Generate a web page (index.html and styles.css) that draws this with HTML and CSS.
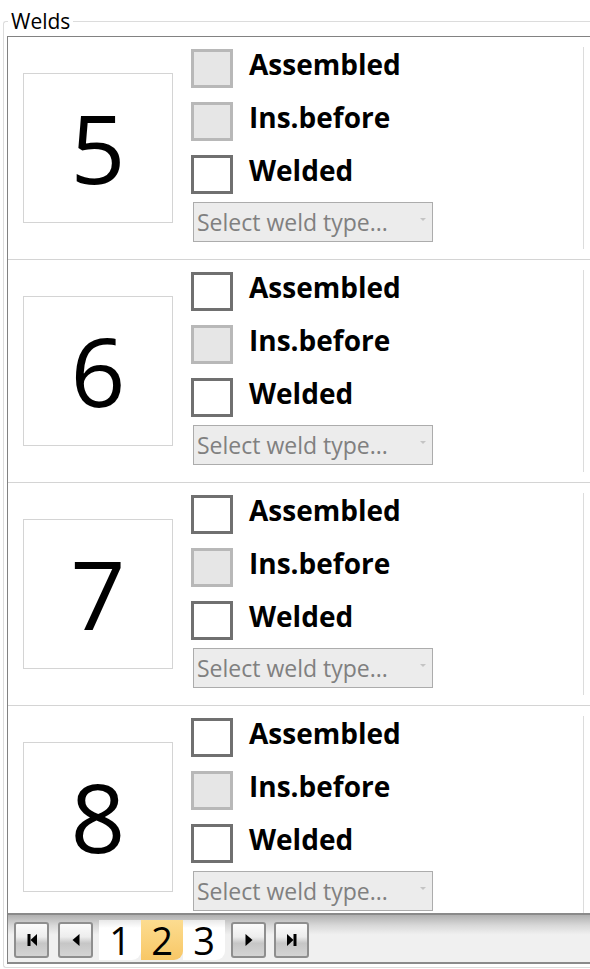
FILE: index.html
```html
<!DOCTYPE html>
<html>
<head>
<meta charset="utf-8">
<link rel="stylesheet" href="styles.css">
</head>
<body>
<div class="group">
  <div class="legend">Welds</div>
  <div class="frame">
    <div class="list">
      <div class="row">
        <div class="cell">
          <div class="numbox">5</div>
          <div class="controls">
            <div class="check"><span class="box disabled"></span><span class="label">Assembled</span></div>
            <div class="check"><span class="box disabled"></span><span class="label">Ins.before</span></div>
            <div class="check"><span class="box"></span><span class="label">Welded</span></div>
            <div class="combo"><span class="combo-text">Select weld type...</span><span class="arrow"></span></div>
          </div>
        </div>
      </div>
      <div class="row">
        <div class="cell">
          <div class="numbox">6</div>
          <div class="controls">
            <div class="check"><span class="box"></span><span class="label">Assembled</span></div>
            <div class="check"><span class="box disabled"></span><span class="label">Ins.before</span></div>
            <div class="check"><span class="box"></span><span class="label">Welded</span></div>
            <div class="combo"><span class="combo-text">Select weld type...</span><span class="arrow"></span></div>
          </div>
        </div>
      </div>
      <div class="row">
        <div class="cell">
          <div class="numbox">7</div>
          <div class="controls">
            <div class="check"><span class="box"></span><span class="label">Assembled</span></div>
            <div class="check"><span class="box disabled"></span><span class="label">Ins.before</span></div>
            <div class="check"><span class="box"></span><span class="label">Welded</span></div>
            <div class="combo"><span class="combo-text">Select weld type...</span><span class="arrow"></span></div>
          </div>
        </div>
      </div>
      <div class="row">
        <div class="cell">
          <div class="numbox">8</div>
          <div class="controls">
            <div class="check"><span class="box"></span><span class="label">Assembled</span></div>
            <div class="check"><span class="box disabled"></span><span class="label">Ins.before</span></div>
            <div class="check"><span class="box"></span><span class="label">Welded</span></div>
            <div class="combo"><span class="combo-text">Select weld type...</span><span class="arrow"></span></div>
          </div>
        </div>
      </div>
    </div>
    <div class="pager">
      <div class="btn first">
        <svg width="14" height="14" viewBox="0 0 14 14"><rect x="2.5" y="1" width="3" height="12" fill="#000"/><polygon points="12,1 12,13 5.5,7" fill="#000"/></svg>
      </div>
      <div class="btn prev">
        <svg width="14" height="14" viewBox="0 0 14 14"><polygon points="10.5,1 10.5,13 3.5,7" fill="#000"/></svg>
      </div>
      <div class="tabs">
        <div class="tab">1</div>
        <div class="tab current">2</div>
        <div class="tab">3</div>
      </div>
      <div class="btn next">
        <svg width="14" height="14" viewBox="0 0 14 14"><polygon points="3.5,1 3.5,13 10.5,7" fill="#000"/></svg>
      </div>
      <div class="btn last">
        <svg width="14" height="14" viewBox="0 0 14 14"><polygon points="2,1 2,13 8.5,7" fill="#000"/><rect x="8.5" y="1" width="3" height="12" fill="#000"/></svg>
      </div>
    </div>
  </div>
</div>
</body>
</html>
```

FILE: styles.css
```css
html, body {
  margin: 0;
  padding: 0;
  background: #ffffff;
  width: 590px;
  height: 969px;
  overflow: hidden;
  font-family: "Open Sans", "Noto Sans", sans-serif;
}

.group {
  position: relative;
  margin: 21px 0 0 3px;
  height: 947px;
  border: 1px solid #dcdcdc;
  border-right: none;
  border-radius: 3px 0 0 3px;
  padding: 14px 0 3px 3px;
  box-sizing: border-box;
}

.legend {
  position: absolute;
  left: 4px;
  top: -13px;
  padding: 0 3px;
  background: #ffffff;
  font-size: 21px;
  line-height: 24px;
  color: #000;
}

.frame {
  border-top: 1px solid #828282;
  border-left: 1px solid #828282;
  display: flex;
  flex-direction: column;
  height: 100%;
  box-sizing: border-box;
}

.list {
  height: 876px;
  flex: none;
  overflow: hidden;
}

.row {
  height: 223px;
  border-bottom: 1px solid #d4d4d4;
  padding: 10px 0 0 0;
  box-sizing: border-box;
}

.cell {
  width: 576px;
  height: 202px;
  border-right: 1px solid #dcdcdc;
  box-sizing: border-box;
  display: flex;
  align-items: center;
}

.numbox {
  width: 150px;
  height: 150px;
  margin-left: 15px;
  border: 1px solid #d4d4d4;
  box-sizing: border-box;
  display: flex;
  align-items: center;
  justify-content: center;
  font-size: 96px;
  line-height: 1;
  color: #000;
  padding-bottom: 2px;
}

.controls {
  align-self: flex-start;
  margin-left: 18px;
  padding-top: 2px;
  display: flex;
  flex-direction: column;
  gap: 14px;
}

.check {
  display: flex;
  align-items: center;
  height: 39px;
}

.box {
  width: 42px;
  height: 39px;
  border: 3px solid #707070;
  background: #ffffff;
  box-sizing: border-box;
}
.box.disabled {
  border-color: #b8b8b8;
  background: #e6e6e6;
}

.label {
  margin-left: 16px;
  font-weight: 700;
  font-size: 28px;
  line-height: 39px;
  color: #000;
  position: relative;
  top: -4px;
}

.combo {
  margin-left: 2px;
  margin-top: -6px;
  width: 240px;
  height: 40px;
  border: 1px solid #acacac;
  background: #ececec;
  box-sizing: border-box;
  display: flex;
  align-items: center;
  justify-content: space-between;
  padding: 0 6px 0 3px;
}

.combo-text {
  font-size: 23px;
  color: #808080;
  line-height: 36px;
  white-space: nowrap;
}

.arrow {
  width: 0;
  height: 0;
  border-left: 3px solid transparent;
  border-right: 3px solid transparent;
  border-top: 3px solid #c4c4c4;
  margin-bottom: 6px;
}

.pager {
  height: 51px;
  flex: none;
  border-top: 2px solid #8a8a8a;
  border-bottom: 2px solid #8a8a8a;
  box-sizing: border-box;
  background: linear-gradient(#b0b0b0 0%, #d8d8d8 22%, #f0f0f0 42%, #f0f0f0 100%);
  display: flex;
  align-items: center;
  padding-left: 6px;
}

.btn {
  width: 35px;
  height: 36px;
  border: 2px solid #8e8e8e;
  border-radius: 3px;
  box-sizing: border-box;
  background: linear-gradient(#fbfbfb 0%, #ededed 40%, #c6c6c6 60%, #d4d4d4 100%);
  display: flex;
  align-items: center;
  justify-content: center;
  margin-top: 3px;
}
.btn.prev { margin-left: 9px; }
.btn.next { margin-left: 6px; }
.btn.last { margin-left: 8px; }

.tabs {
  display: flex;
  margin-left: 6px;
  height: 40px;
  margin-top: 2px;
}

.tab {
  width: 42px;
  height: 40px;
  border-radius: 0 0 9px 0;
  background: linear-gradient(#e8e8e8 0%, #ffffff 20%, #ffffff 100%);
  font-size: 38px;
  line-height: 40px;
  text-align: center;
  color: #000;
}
.tab.current {
  background: linear-gradient(#fcdc90 0%, #f8c766 100%);
}
```
